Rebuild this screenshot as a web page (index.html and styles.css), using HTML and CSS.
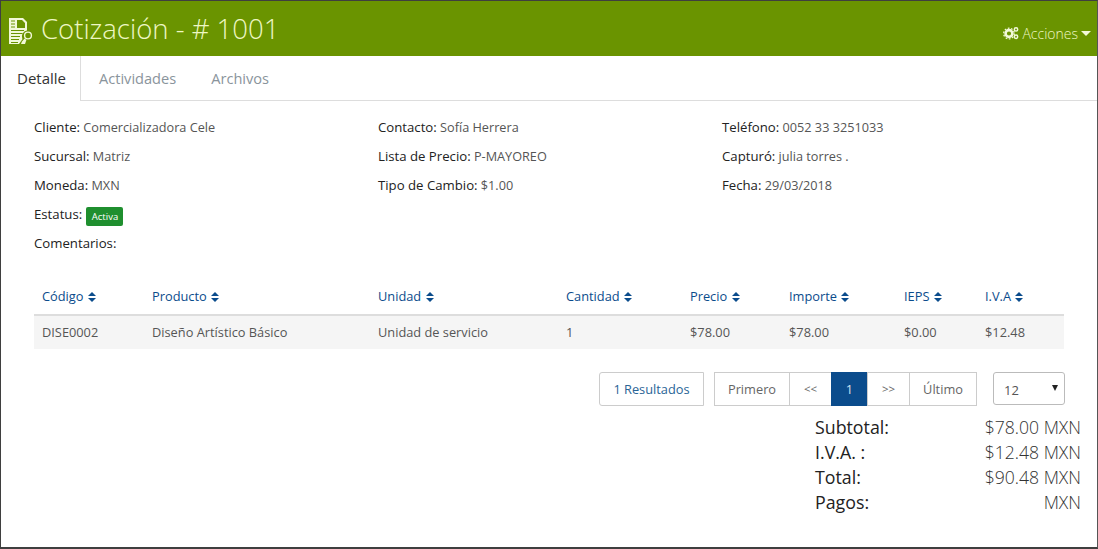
FILE: index.html
```html
<!DOCTYPE html>
<html lang="es">
<head>
<meta charset="utf-8">
<title>Cotización</title>
<link rel="stylesheet" href="styles.css">
</head>
<body>
<div class="window">
  <header class="topbar">
    <div class="title">
      <svg class="doc-icon" width="26" height="30" viewBox="0 0 26 30">
        <path fill="#f2f8d8" fill-rule="evenodd" d="M2 2h14l4 4v8.6a6 6 0 0 0-4.6 8.6L12 28H2zM4 4.5v1h4v-1zM10 4v8h8V7l-3-3zM4 7.5v1h4v-1zM4 10.5v1h4v-1zM4 14v1h13v-1zM4 17v1h12v-1zM4 20v1h9v-1zM4 23v1h8v-1zM4 26v1h7v-1z"/>
        <circle cx="21" cy="19.5" r="3.4" fill="none" stroke="#f2f8d8" stroke-width="1.4"/>
        <path fill="#f2f8d8" d="M14 28l1-2.6 2.6-3 1.8 1.6-1.4 4z"/>
      </svg>
      <h1>Cotización - # 1001</h1>
    </div>
    <div class="actions">
      <svg width="16" height="14" viewBox="0 0 16 14">
        <circle cx="6" cy="7.5" r="3.4" fill="none" stroke="#f2f8d8" stroke-width="2.6"/>
        <circle cx="6" cy="7.5" r="5.3" fill="none" stroke="#f2f8d8" stroke-width="1.3" stroke-dasharray="1.7 1.6"/>
        <circle cx="13" cy="3.4" r="1.7" fill="none" stroke="#f2f8d8" stroke-width="1.5"/>
        <circle cx="13" cy="10.8" r="1.7" fill="none" stroke="#f2f8d8" stroke-width="1.5"/>
      </svg>
      <span>Acciones</span>
      <i class="caret"></i>
    </div>
  </header>

  <nav class="tabs">
    <a class="tab active">Detalle</a>
    <a class="tab">Actividades</a>
    <a class="tab">Archivos</a>
  </nav>

  <main class="content">
    <section class="details">
      <p><b>Cliente:</b> Comercializadora Cele</p>
      <p><b>Contacto:</b> Sofía Herrera</p>
      <p><b>Teléfono:</b> 0052 33 3251033</p>
      <p><b>Sucursal:</b> Matriz</p>
      <p><b>Lista de Precio:</b> P-MAYOREO</p>
      <p><b>Capturó:</b> julia torres .</p>
      <p><b>Moneda:</b> MXN</p>
      <p><b>Tipo de Cambio:</b> $1.00</p>
      <p><b>Fecha:</b> 29/03/2018</p>
      <p class="full"><b>Estatus:</b> <span class="badge">Activa</span></p>
      <p class="full"><b>Comentarios:</b></p>
    </section>

    <table class="items">
      <colgroup>
        <col class="c1"><col class="c2"><col class="c3"><col class="c4"><col class="c5"><col class="c6"><col class="c7"><col class="c8">
      </colgroup>
      <thead>
        <tr>
          <th>Código <i class="sort"></i></th>
          <th>Producto <i class="sort"></i></th>
          <th>Unidad <i class="sort"></i></th>
          <th>Cantidad <i class="sort"></i></th>
          <th>Precio <i class="sort"></i></th>
          <th>Importe <i class="sort"></i></th>
          <th>IEPS <i class="sort"></i></th>
          <th>I.V.A <i class="sort"></i></th>
        </tr>
      </thead>
      <tbody>
        <tr>
          <td>DISE0002</td>
          <td>Diseño Artístico Básico</td>
          <td>Unidad de servicio</td>
          <td>1</td>
          <td>$78.00</td>
          <td>$78.00</td>
          <td>$0.00</td>
          <td>$12.48</td>
        </tr>
      </tbody>
    </table>

    <div class="pager-row">
      <span class="results">1 Resultados</span>
      <div class="pager">
        <a class="first">Primero</a>
        <a class="small">&lt;&lt;</a>
        <a class="current">1</a>
        <a class="small">&gt;&gt;</a>
        <a class="last">Último</a>
      </div>
      <div class="select"><span>12</span><i class="select-caret"></i></div>
    </div>

    <dl class="totals">
      <dt>Subtotal:</dt><dd>$78.00 MXN</dd>
      <dt>I.V.A. :</dt><dd>$12.48 MXN</dd>
      <dt>Total:</dt><dd>$90.48 MXN</dd>
      <dt>Pagos:</dt><dd>MXN</dd>
    </dl>
  </main>
</div>
</body>
</html>
```
FILE: styles.css
```css
* { box-sizing: border-box; }
html, body { margin: 0; padding: 0; }
body { font-family: "Open Sans", "Liberation Sans", sans-serif; color: #333; background: #fff; }

.window {
  width: 1098px;
  height: 549px;
  border: 1px solid #3f3f3f;
  border-bottom-width: 2px;
  border-right-color: #555;
  overflow: hidden;
}

.topbar {
  height: 55px;
  background: #6a9400;
  display: flex;
  justify-content: space-between;
  color: #eef7c4;
}
.title { display: flex; align-items: center; padding-left: 6px; height: 56px; }
.doc-icon { margin-top: 3px; }
.title h1 { margin: 0 0 0 8px; font-size: 27.5px; font-weight: 300; line-height: 56px; }
.actions {
  display: flex;
  align-items: center;
  height: 16px;
  margin-top: 24px;
  margin-right: 6px;
  font-size: 14px;
  font-weight: 300;
}
.actions span { margin-left: 3px; }
.caret {
  width: 0; height: 0;
  margin-left: 3px;
  border-left: 5px solid transparent;
  border-right: 5px solid transparent;
  border-top: 5px solid #f2f8d8;
}

.tabs {
  height: 45px;
  display: flex;
  border-bottom: 1px solid #ddd;
  font-size: 14.6px;
}
.tab {
  display: block;
  padding: 13px 17px 0 18px;
  line-height: 19px;
  color: #8a949c;
  height: 45px;
}
.tab.active {
  color: #333;
  font-size: 15px;
  width: 80px;
  padding: 13px 0 0 16px;
  background: #fff;
  border-right: 1px solid #ddd;
}
.tab:nth-child(3) { padding-left: 18px; }

.content { padding: 0 16px 0 33px; }

.details {
  display: grid;
  grid-template-columns: 344px 344px 1fr;
  margin-top: 12px;
  width: 1030px;
  font-size: 12.7px;
  color: #555;
}
.details p { margin: 0; height: 29px; line-height: 29px; white-space: nowrap; }
.details .full { grid-column: 1 / -1; }
.details b { font-weight: 400; font-size: 13.2px; color: #222; }
.badge {
  display: inline-block;
  background: #1f8f2f;
  color: #fff;
  font-size: 9.5px;
  line-height: 19px;
  height: 19px;
  width: 37px;
  margin-left: 1px;
  text-align: center;
  border-radius: 2px;
  vertical-align: -1px;
}

.items {
  width: 1030px;
  margin-top: 21px;
  border-collapse: collapse;
  table-layout: fixed;
  font-size: 12.8px;
}
.c1 { width: 110px; } .c2 { width: 226px; } .c3 { width: 188px; } .c4 { width: 124px; }
.c5 { width: 99px; } .c6 { width: 115px; } .c7 { width: 81px; } .c8 { width: 87px; }
.items th {
  height: 36px;
  padding: 0 8px 2px;
  text-align: left;
  font-weight: 400;
  color: #0b4c8c;
  border-bottom: 2px solid #ddd;
  white-space: nowrap;
}
.items td {
  height: 34px;
  padding: 0 8px 2px;
  background: #f5f5f5;
  color: #555;
  white-space: nowrap;
}
.sort {
  display: inline-block;
  position: relative;
  width: 8px;
  height: 10px;
  margin-left: 1px;
  vertical-align: -1px;
}
.sort::before, .sort::after {
  content: "";
  position: absolute;
  left: 0;
  border-left: 4px solid transparent;
  border-right: 4px solid transparent;
}
.sort::before { top: 0; border-bottom: 4px solid #0b4c8c; }
.sort::after { bottom: 0; border-top: 4px solid #0b4c8c; }

.pager-row {
  display: flex;
  justify-content: flex-end;
  margin-top: 23px;
  width: 1031px;
  font-size: 12.8px;
  height: 34px;
}
.results {
  display: block;
  width: 105px;
  height: 34px;
  line-height: 32px;
  text-align: center;
  border: 1px solid #ccc;
  border-radius: 3px 0 0 3px;
  color: #2a6496;
}
.pager { display: flex; margin-left: 10px; height: 34px; }
.pager a {
  display: block;
  height: 34px;
  line-height: 32px;
  border: 1px solid #ccc;
  margin-left: -1px;
  color: #666;
  text-align: center;
}
.pager a.first { margin-left: 0; width: 76px; }
.pager a.last { width: 68px; }
.pager a.small { width: 43px; font-size: 11.5px; }
.pager a.current { width: 37px; background: #0b4c8c; border-color: #0b4c8c; color: #cfe0ef; }
.select {
  position: relative;
  width: 72px;
  height: 33px;
  margin-left: 16px;
  border: 1px solid #bbb;
  border-radius: 3px;
  line-height: 34px;
  padding-left: 10px;
  color: #555;
  font-size: 13px;
}
.select-caret {
  position: absolute;
  right: 6px;
  top: 12px;
  border-left: 3.5px solid transparent;
  border-right: 3.5px solid transparent;
  border-top: 6px solid #222;
}

.totals {
  display: grid;
  grid-template-columns: 1fr auto;
  width: 266px;
  margin: 9px 0 0 781px;
  font-size: 17.8px;
  line-height: 25px;
}
.totals dt { color: #222; font-weight: 400; }
.totals dd { margin: 0; text-align: right; font-weight: 300; font-size: 17.6px; color: #333; }
```
